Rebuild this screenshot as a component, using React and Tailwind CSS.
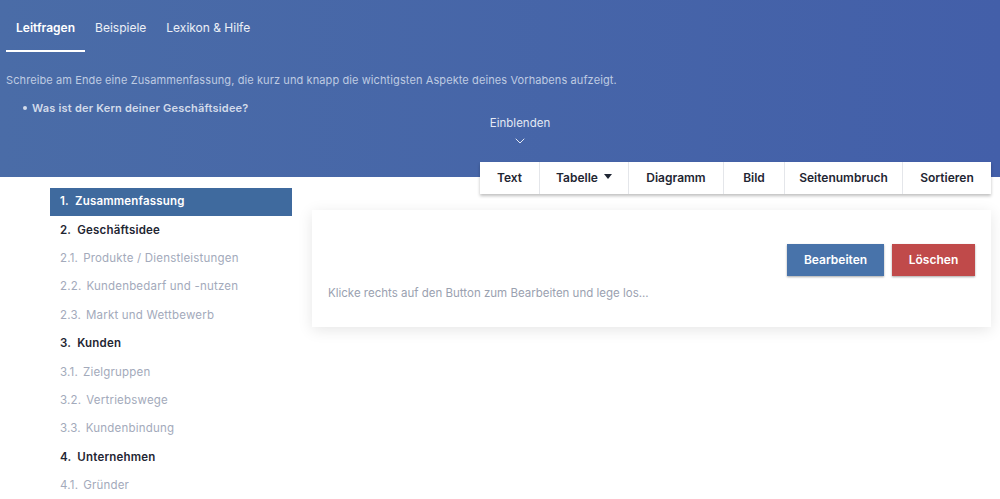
import { ChevronDown } from "lucide-react";

const tabs = ["Leitfragen", "Beispiele", "Lexikon & Hilfe"];

const tools = [
  { label: "Text", w: "w-[59px]" },
  { label: "Tabelle", w: "w-[89px]", caret: true },
  { label: "Diagramm", w: "w-[95px]" },
  { label: "Bild", w: "w-[61px]" },
  { label: "Seitenumbruch", w: "w-[118px]" },
  { label: "Sortieren", w: "w-[89px]" },
];

const chapters = [
  { no: "1.", title: "Zusammenfassung", main: true, active: true },
  { no: "2.", title: "Geschäftsidee", main: true },
  { no: "2.1.", title: "Produkte / Dienstleistungen" },
  { no: "2.2.", title: "Kundenbedarf und -nutzen" },
  { no: "2.3.", title: "Markt und Wettbewerb" },
  { no: "3.", title: "Kunden", main: true },
  { no: "3.1.", title: "Zielgruppen" },
  { no: "3.2.", title: "Vertriebswege" },
  { no: "3.3.", title: "Kundenbindung" },
  { no: "4.", title: "Unternehmen", main: true },
  { no: "4.1.", title: "Gründer" },
];

export default function App() {
  return (
    <div className="h-[499px] overflow-hidden bg-white font-['Inter','Liberation_Sans',sans-serif]">
      <header className="h-[177px] bg-gradient-to-r from-[#4a6ca7] to-[#435fa9]">
        <nav className="flex pl-[6px] pt-[19px]">
          {tabs.map((t, i) => (
            <div
              key={t}
              className={
                i === 0
                  ? "px-[10px] pb-[13px] text-[12px] font-semibold text-white border-b-2 border-white"
                  : "px-[10px] pb-[13px] text-[12px] text-white/90"
              }
            >
              {t}
            </div>
          ))}
        </nav>
        <p className="mt-[20px] pl-[6px] text-[11px] tracking-[0.1px] text-[#bfcbe2]">
          Schreibe am Ende eine Zusammenfassung, die kurz und knapp die wichtigsten Aspekte deines Vorhabens aufzeigt.
        </p>
        <ul className="mt-[11px] pl-[23px] text-[11px] font-semibold tracking-[0.2px] text-[#d3dbea]">
          <li className="flex items-center gap-[5px]">
            <span className="h-[4px] w-[4px] rounded-full bg-[#d3dbea]" />
            Was ist der Kern deiner Geschäftsidee?
          </li>
        </ul>
        <div className="-mt-[1px] ml-[40px] flex flex-col items-center text-[11.5px] text-[#e3e9f4]">
          <span>Einblenden</span>
          <ChevronDown className="mt-[1px] h-[16px] w-[16px]" strokeWidth={1.5} />
        </div>
      </header>

      <div className="flex pt-[11px]">
        <aside className="ml-[50px] w-[242px] shrink-0">
          {chapters.map((c) => (
            <div
              key={c.no}
              className={
                c.active
                  ? "flex h-[28px] items-center gap-[6px] bg-[#3f6a9e] pl-[10px] text-[11.5px] font-semibold tracking-[0.2px] text-white"
                  : c.main
                  ? "flex h-[28.4px] items-center gap-[6px] pl-[10px] text-[11.5px] font-semibold tracking-[0.2px] text-[#1f2633]"
                  : "flex h-[28.4px] items-center gap-[5px] pl-[10px] text-[11.5px] tracking-[0.2px] text-[#a3aabb]"
              }
            >
              <span>{c.no}</span>
              <span>{c.title}</span>
            </div>
          ))}
        </aside>

        <main className="ml-[20px] mr-[9px] flex-1">
          <div className="-mt-[26px] flex justify-end">
            <div className="flex h-[32px] bg-white shadow-[0_2px_3px_rgba(0,0,0,0.25)]">
              {tools.map((t, i) => (
                <div
                  key={t.label}
                  className={`${t.w} flex items-center justify-center gap-[6px] text-[12px] font-semibold text-[#1f2633] ${
                    i > 0 ? "border-l border-[#e4e6ea]" : ""
                  }`}
                >
                  {t.label}
                  {t.caret && (
                    <span className="h-0 w-0 border-x-[4px] border-t-[5px] border-x-transparent border-t-[#1f2633] -mt-[3px]" />
                  )}
                </div>
              ))}
            </div>
          </div>

          <section className="mt-[16px] flex h-[117px] items-start justify-between bg-white px-[16px] pt-[34px] shadow-[0_3px_14px_rgba(0,0,0,0.10)]">
            <p className="mt-[41px] text-[11.5px] text-[#9aa1b0]">
              Klicke rechts auf den Button zum Bearbeiten und lege los...
            </p>
            <div className="flex gap-[8px]">
              <button className="h-[32px] w-[97px] bg-[#4873aa] text-[12px] font-semibold text-white shadow-[0_1px_2px_rgba(0,0,0,0.35)]">
                Bearbeiten
              </button>
              <button className="h-[32px] w-[83px] bg-[#c04a4a] text-[12px] font-semibold text-white shadow-[0_1px_2px_rgba(0,0,0,0.35)]">
                Löschen
              </button>
            </div>
          </section>
        </main>
      </div>
    </div>
  );
}
